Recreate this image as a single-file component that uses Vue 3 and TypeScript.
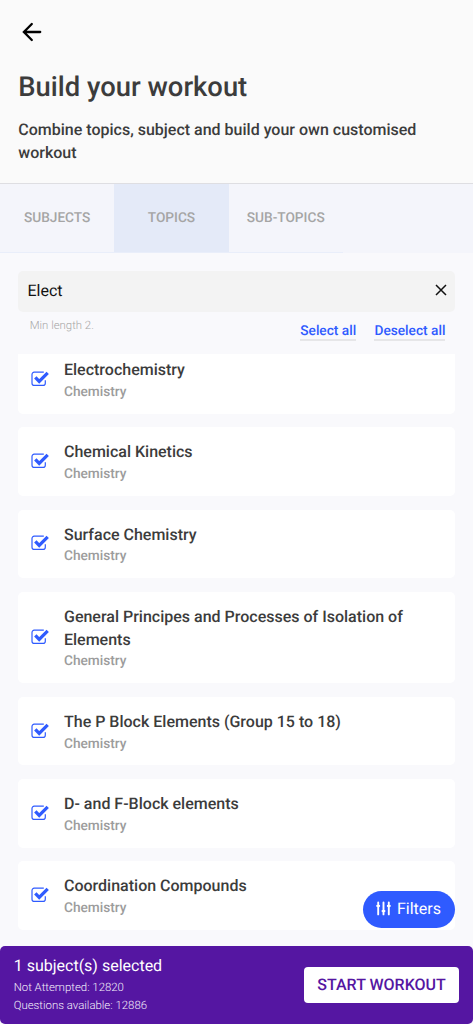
<script setup lang="ts">
import { ref } from 'vue'

interface Topic {
  name: string
  subject: string
}

const tabs: string[] = ['SUBJECTS', 'TOPICS', 'SUB-TOPICS']
const activeTab = ref('TOPICS')
const query = ref('Elect')

const topics: Topic[] = [
  { name: 'Electrochemistry', subject: 'Chemistry' },
  { name: 'Chemical Kinetics', subject: 'Chemistry' },
  { name: 'Surface Chemistry', subject: 'Chemistry' },
  { name: 'General Principes and Processes of Isolation of Elements', subject: 'Chemistry' },
  { name: 'The P Block Elements (Group 15 to 18)', subject: 'Chemistry' },
  { name: 'D- and F-Block elements', subject: 'Chemistry' },
  { name: 'Coordination Compounds', subject: 'Chemistry' },
]
</script>

<template>
  <div class="screen">
    <header class="header">
      <svg class="back" viewBox="0 0 20 20" fill="none" stroke="#000" stroke-width="2.3" stroke-linecap="round">
        <path d="M18.2 10H2.4M9.8 2 1.9 10l7.9 8" />
      </svg>
      <h1 class="title">Build your workout</h1>
      <p class="lead">Combine topics, subject and build your own customised workout</p>
    </header>

    <nav class="tabs">
      <button
        v-for="tab in tabs"
        :key="tab"
        class="tab"
        :class="{ active: tab === activeTab }"
        @click="activeTab = tab"
      >{{ tab }}</button>
    </nav>

    <main class="content">
      <div class="search">
        <span class="query">{{ query }}</span>
        <svg class="clear" viewBox="0 0 12 12" fill="none" stroke="#111" stroke-width="1.5">
          <path d="M1 1l10 10M11 1L1 11" />
        </svg>
      </div>
      <div class="tools">
        <span class="hint">Min length 2.</span>
        <a class="link">Select all</a>
        <a class="link">Deselect all</a>
      </div>
      <div class="viewport">
        <div class="list">
          <article v-for="topic in topics" :key="topic.name" class="card">
            <svg class="check" viewBox="0 0 18 16" fill="none" stroke="#2f5bff">
              <path d="M12.8 1.2H3.2A2.2 2.2 0 0 0 1 3.4v8.8a2.2 2.2 0 0 0 2.2 2.2h8.9a2.2 2.2 0 0 0 2.2-2.2V9.2" stroke-width="1.2" />
              <path d="M4.3 6.4 8.2 10.4l8.5-8.5" stroke-width="3.3" />
            </svg>
            <div class="info">
              <div class="name">{{ topic.name }}</div>
              <div class="subject">{{ topic.subject }}</div>
            </div>
          </article>
        </div>
      </div>
      <button class="filters">
        <svg class="sliders" viewBox="0 0 15 15" fill="none" stroke="#fff" stroke-linecap="round">
          <path d="M2.2 1.5v1.8M2.2 5v8.4M7.5 1.5v8M7.5 11.6v1.8M12.8 1.5v1.8M12.8 5v8.4" stroke-width="1.9" />
          <path d="M1.3 4.9h1.8M6.6 10.1h1.8M11.9 4.9h1.8" stroke-width="2.2" />
        </svg>
        <span class="filters-label">Filters</span>
      </button>
    </main>

    <footer class="footer">
      <div class="summary">
        <div class="selected">1 subject(s) selected</div>
        <div class="stat">Not Attempted: 12820</div>
        <div class="stat">Questions available: 12886</div>
      </div>
      <button class="start">START WORKOUT</button>
    </footer>
  </div>
</template>

<style>
body {
  margin: 0;
  background: #f9f9fc;
}
</style>

<style scoped>
.screen {
  display: flex;
  flex-direction: column;
  width: 100%;
  height: 1024px;
  overflow: hidden;
  background: #f9f9fc;
  color: #3c3c3c;
  font-family: Roboto, "Liberation Sans", sans-serif;
  text-rendering: geometricPrecision;
}

button {
  border: 0;
  margin: 0;
  padding: 0;
  font-family: inherit;
  text-rendering: inherit;
}

.header {
  box-sizing: border-box;
  height: 184px;
  flex: none;
  padding: 22px 18.3px 0;
  background: #fafafa;
  border-bottom: 1.2px solid #dedee2;
}

.back {
  display: block;
  width: 20px;
  height: 20px;
  margin-left: 4px;
}

.title {
  margin: 28px 0 0;
  font-size: 27.4px;
  font-weight: 500;
  line-height: 34px;
}

.lead {
  margin: 15px 0 0;
  font-size: 16px;
  font-weight: 500;
  line-height: 22.85px;
}

.tabs {
  display: flex;
  flex: none;
  height: 69px;
  background: #f4f5fb;
}

.tab {
  box-sizing: border-box;
  width: 114.3px;
  border-bottom: 1.2px solid #e9eefa;
  background: transparent;
  color: #a5a5a5;
  font-size: 13.7px;
  font-weight: 500;
}

.tab.active {
  background: #e4eaf8;
}

.content {
  position: relative;
  flex: 1;
  min-height: 0;
  padding: 18px 18.3px 0;
}

.search {
  display: flex;
  align-items: center;
  justify-content: space-between;
  height: 41px;
  padding: 0 8px 0 9.2px;
  border-radius: 5px;
  background: #f3f3f3;
}

.query {
  margin-top: -2px;
  color: #111;
  font-size: 16px;
}

.clear {
  width: 12px;
  height: 12px;
  margin-top: -3px;
}

.tools {
  display: flex;
  align-items: flex-start;
  gap: 18.3px;
  height: 42px;
  padding: 0 9.3px 0 11.4px;
}

.hint {
  flex: 1;
  margin-top: 5px;
  color: #a8a8a8;
  font-size: 11.4px;
  font-weight: 300;
  line-height: 16px;
}

.link {
  margin-top: 11px;
  border-bottom: 2px solid #e6e6e8;
  color: #2f5bff;
  font-size: 13.7px;
  font-weight: 500;
  line-height: 16px;
}

.viewport {
  height: 593px;
  overflow: hidden;
}

.list {
  display: flex;
  flex-direction: column;
  gap: 13.7px;
  margin-top: -8.8px;
}

.card {
  display: flex;
  align-items: center;
  padding: 13.9px 13.2px 11.7px;
  border-radius: 5px;
  background: #fff;
}

.check {
  flex: none;
  width: 18px;
  height: 16px;
  margin: -3.4px 14.5px 0 0;
}

.name {
  font-size: 16px;
  font-weight: 500;
  line-height: 22.85px;
}

.subject {
  color: #9c9c9c;
  font-size: 13.7px;
  font-weight: 500;
  line-height: 20.1px;
}

.filters {
  position: absolute;
  right: 18.3px;
  bottom: 18.5px;
  display: flex;
  align-items: center;
  justify-content: center;
  gap: 6px;
  width: 91.5px;
  height: 36.6px;
  padding-right: 1px;
  box-sizing: border-box;
  border-radius: 19px;
  background: #2f5bff;
  color: #fff;
  font-size: 16px;
}

.filters-label {
  margin-top: -2px;
}

.sliders {
  width: 15px;
  height: 15px;
  margin-top: -2px;
}

.footer {
  display: flex;
  align-items: center;
  justify-content: space-between;
  box-sizing: border-box;
  height: 77.7px;
  flex: none;
  padding: 0 13.7px;
  border-radius: 5px;
  background: #5516a2;
  color: #fff;
}

.selected {
  font-size: 16px;
  line-height: 22.85px;
}

.stat {
  color: #f3edf9;
  font-size: 11.4px;
  font-weight: 300;
  line-height: 18.3px;
}

.summary {
  margin-top: -0.8px;
}

.start {
  width: 155.5px;
  height: 36.6px;
  padding-bottom: 1px;
  border-radius: 4px;
  background: #fff;
  color: #5516a2;
  font-size: 16px;
  font-weight: 500;
}
</style>
